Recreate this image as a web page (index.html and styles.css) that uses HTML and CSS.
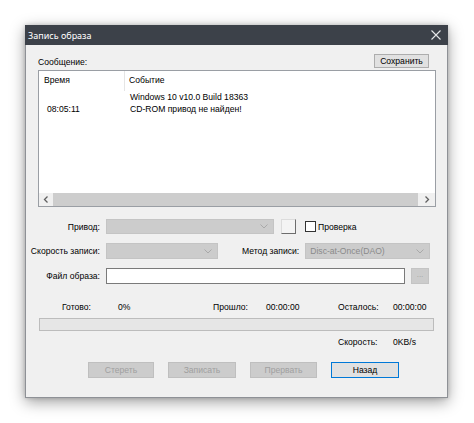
FILE: index.html
```html
<!DOCTYPE html>
<html lang="ru">
<head>
<meta charset="utf-8">
<title>Запись образа</title>
<link rel="stylesheet" href="styles.css">
</head>
<body>
<div class="stage">
  <div class="window">
    <div class="titlebar">
      <span class="title">Запись образа</span>
      <svg class="close" width="10" height="10" viewBox="0 0 10 10"><path d="M0.5 0.5 L9.5 9.5 M9.5 0.5 L0.5 9.5" stroke="#e6e7e9" stroke-width="1.1" fill="none"/></svg>
    </div>
    <div class="content">
      <div class="head">
        <span class="caption">Сообщение:</span>
        <button class="btn save">Сохранить</button>
      </div>
      <div class="list">
        <div class="list-head">
          <div class="col-time">Время</div>
          <div class="col-event">Событие</div>
        </div>
        <div class="row"><div class="cell-time"></div><div class="cell-event">Windows 10 v10.0 Build 18363</div></div>
        <div class="row"><div class="cell-time">08:05:11</div><div class="cell-event">CD-ROM привод не найден!</div></div>
        <div class="hscroll">
          <div class="arrow"><svg width="6" height="7" viewBox="0 0 6 7"><path d="M4.5 0.5 L1.5 3.5 L4.5 6.5" stroke="#606060" stroke-width="1.3" fill="none"/></svg></div>
          <div class="thumb"></div>
          <div class="arrow"><svg width="6" height="7" viewBox="0 0 6 7"><path d="M1.5 0.5 L4.5 3.5 L1.5 6.5" stroke="#606060" stroke-width="1.3" fill="none"/></svg></div>
        </div>
      </div>

      <div class="form">
        <div class="frow r1">
          <div class="lbl">Привод:</div>
          <div class="combo c-drive"><span class="val"></span><svg class="chev" width="8" height="5" viewBox="0 0 8 5"><path d="M0.5 0.5 L4 4 L7.5 0.5" stroke="#a9a9a9" stroke-width="1" fill="none"/></svg></div>
          <div class="sqbtn"></div>
          <div class="check"></div>
          <span class="chk-lbl">Проверка</span>
        </div>
        <div class="frow r2">
          <div class="lbl">Скорость записи:</div>
          <div class="combo c-speed"><span class="val"></span><svg class="chev" width="8" height="5" viewBox="0 0 8 5"><path d="M0.5 0.5 L4 4 L7.5 0.5" stroke="#a9a9a9" stroke-width="1" fill="none"/></svg></div>
          <div class="lbl2">Метод записи:</div>
          <div class="combo c-method"><span class="val">Disc-at-Once(DAO)</span><svg class="chev" width="8" height="5" viewBox="0 0 8 5"><path d="M0.5 0.5 L4 4 L7.5 0.5" stroke="#a9a9a9" stroke-width="1" fill="none"/></svg></div>
        </div>
        <div class="frow r3">
          <div class="lbl">Файл образа:</div>
          <div class="textbox"></div>
          <div class="dots">...</div>
        </div>
      </div>

      <div class="stats">
        <span class="s-l1">Готово:</span><span class="s-v1">0%</span>
        <span class="s-l2">Прошло:</span><span class="s-v2">00:00:00</span>
        <span class="s-l3">Осталось:</span><span class="s-v3">00:00:00</span>
      </div>
      <div class="progress"></div>
      <div class="stats speed">
        <span class="s-l3">Скорость:</span><span class="s-v3">0KB/s</span>
      </div>

      <div class="buttons">
        <button class="btn dis b1">Стереть</button>
        <button class="btn dis b2">Записать</button>
        <button class="btn dis b3">Прервать</button>
        <button class="btn def b4">Назад</button>
      </div>
    </div>
  </div>
</div>
</body>
</html>
```

FILE: styles.css
```css
* { box-sizing: border-box; }
html, body { margin: 0; padding: 0; background: #ffffff; }
body {
  font-family: "Liberation Sans", Arial, sans-serif;
  font-size: 8.6px;
  color: #000;
  width: 474px;
  height: 423px;
  overflow: hidden;
}
.stage { padding: 25px 0 0 25px; }
.window {
  width: 423px;
  height: 373px;
  background: #f0f0f0;
  border: 1px solid #8e9196;
  border-top: none;
  box-shadow: 0 4px 14px rgba(0,0,0,0.38), 0 0 4px rgba(0,0,0,0.18);
  display: flex;
  flex-direction: column;
}
.titlebar {
  height: 20px;
  margin: 0 -1px;
  background: #3c4149;
  display: flex;
  align-items: center;
  justify-content: space-between;
  padding: 0 7px 0 3px;
}
.title {
  color: #ffffff;
  font-family: "Noto Sans", "Open Sans", sans-serif;
  font-size: 9px;
}
.close { display: block; }
.content { padding: 9px 11px 0 12px; }
.head {
  height: 14px;
  display: flex;
  justify-content: space-between;
  align-items: flex-end;
}
.caption { line-height: 11px; }
.btn {
  font-family: "Liberation Sans", Arial, sans-serif;
  font-size: 8.6px;
  color: #000;
  background: #e1e1e1;
  border: 1px solid #adadad;
  padding: 0;
  margin: 0;
}
.save { width: 55px; height: 14px; margin-right: 7px; }
.list {
  margin-top: 2px;
  height: 137px;
  background: #fff;
  border: 1px solid #9a9ea4;
  display: flex;
  flex-direction: column;
}
.list-head { display: flex; height: 20px; }
.col-time {
  width: 86px;
  padding-left: 5px;
  line-height: 19px;
  border-right: 1px solid #e5e5e5;
}
.col-event { padding-left: 4px; line-height: 19px; }
.row { display: flex; height: 12px; line-height: 12px; }
.cell-time { width: 86px; padding-left: 8px; }
.cell-event { padding-left: 5px; }
.hscroll {
  margin-top: auto;
  height: 13px;
  background: #f0f0f0;
  display: grid;
  grid-template-columns: 14px 1fr 17px;
}
.arrow { display: flex; align-items: center; justify-content: center; }
.thumb { background: #cdcdcd; }

.form { margin-top: 12px; display: flex; flex-direction: column; gap: 9px; }
.frow { display: flex; align-items: center; }
.r1 { height: 15px; }
.r2, .r3 { height: 16px; }
.lbl {
  width: 62px;
  margin-right: 6px;
  display: flex;
  justify-content: flex-end;
  white-space: nowrap;
}
.combo {
  height: 100%;
  background: #cccccc;
  border: 1px solid #c4c4c4;
  display: flex;
  align-items: center;
  justify-content: space-between;
  padding: 0 5px 0 4px;
  color: #8a8a8a;
}
.c-drive { width: 168px; }
.c-speed { width: 112px; }
.c-method { width: 125px; }
.sqbtn {
  width: 15px;
  height: 15px;
  margin-left: 7px;
  background: #f4f4f4;
  border: 1px solid #dcdcdc;
  border-right-color: #6d6d6d;
  border-bottom-color: #6d6d6d;
}
.check {
  width: 11px;
  height: 11px;
  margin-left: 9px;
  background: #fff;
  border: 1px solid #333;
}
.chk-lbl { margin-left: 2px; }
.lbl2 { margin-left: 24px; margin-right: 6px; white-space: nowrap; }
.textbox {
  width: 299px;
  height: 100%;
  background: #fff;
  border: 1px solid #7a7a7a;
}
.dots {
  width: 18px;
  height: 100%;
  margin-left: 6px;
  background: #cccccc;
  border: 1px solid #c4c4c4;
  color: #a0a0a0;
  font-size: 8px;
  text-align: center;
  line-height: 12px;
}

.stats {
  margin-top: 17px;
  height: 12px;
  line-height: 12px;
  display: grid;
  grid-template-columns: 24px 56px 95px 53px 72px 55px 1fr;
}
.s-l1 { grid-column: 2; }
.s-v1 { grid-column: 3; }
.s-l2 { grid-column: 4; }
.s-v2 { grid-column: 5; }
.s-l3 { grid-column: 6; }
.s-v3 { grid-column: 7; }
.progress {
  margin: 5px 2px 0 1px;
  height: 13px;
  background: #e6e6e6;
  border: 1px solid #bcbcbc;
}
.speed { margin-top: 5px; }

.buttons {
  margin-top: 14px;
  padding-left: 50px;
  display: flex;
  gap: 14px;
}
.buttons .btn { height: 16px; }
.dis { background: #cccccc; border-color: #bfbfbf; color: #a0a0a0; }
.b1 { width: 66px; }
.b2 { width: 68px; }
.b3 { width: 67px; }
.b4 { width: 68px; }
.def { border: 1px solid #0078d7; background: #e1e1e1; }
```
